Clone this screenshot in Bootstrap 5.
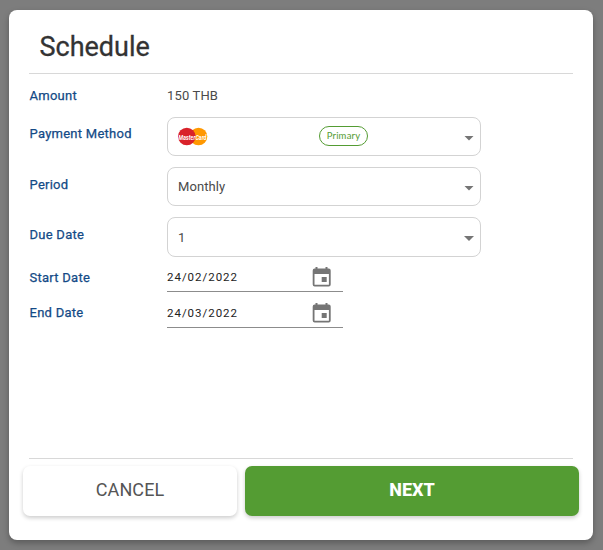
<!DOCTYPE html>
<html lang="en">
<head>
<meta charset="utf-8">
<meta name="viewport" content="width=device-width, initial-scale=1">
<title>Schedule</title>
<link href="https://cdn.jsdelivr.net/npm/bootstrap@5.3.0/dist/css/bootstrap.min.css" rel="stylesheet">
<style>
body{background:#7d7d7d;font-family:Roboto,"Liberation Sans",sans-serif;font-size:13px;line-height:20px;color:#4a4a4a;height:550px;overflow:hidden;padding:10px 10px 10px 9px}
.dialog-box{height:530px;border-radius:8px;box-shadow:0 3px 6px rgba(0,0,0,.28)}
.dialog-title{font-size:27px;line-height:32px;font-weight:400;-webkit-text-stroke:.3px #333;color:#333;margin:0 20px;padding:21px 10px 10px 10.5px;border-bottom:1px solid #d8d8d8}
.form-rows{padding:0 20px}
.field-label{width:138px;padding-left:.5px;color:#134a86;font-weight:400;-webkit-text-stroke:.25px #134a86;letter-spacing:.26px}
.amount-text{letter-spacing:.15px}
.select-box{width:314px;height:39px;border:1px solid #d3d3d3;border-radius:8px;padding:1px 6px 0 10px;letter-spacing:.1px}
.brand-logo{margin-top:-1px;overflow:visible}
.caret{width:10px;height:5px;background:#757575;clip-path:polygon(0 0,100% 0,50% 100%);margin-top:2px}
.primary-pill{width:49px;height:20px;border:1px solid #549c33;border-radius:10px;color:#549c33;font:9.5px/17px Lato,sans-serif;letter-spacing:.2px;margin:-3px 0 0 111px}
.date-box{width:176px;height:30px;border-bottom:1px solid #8c8c8c;color:#222;font-size:11.5px;letter-spacing:.98px;padding:0 9px 0 0}
.footer-rule{margin:0 20px;border-top:1px solid #d8d8d8}
.footer-btns{gap:8px;padding:7px 14px 24px}
.action-btn{height:50px;border:0;border-radius:7px;font-size:18px;line-height:26px;padding:0 0 2px;box-shadow:0 2px 4px rgba(0,0,0,.2)}
.cancel-btn{width:214px;background:#fff;color:#555;letter-spacing:.1px}
.next-btn{width:334px;background:#549c33;color:#fff;font-weight:800}
.row-amount{height:43px;padding-top:12px}
.row-select{height:50px}
.row-select .field-label{padding-top:7px}
.row-due .select-box{height:40px}
.row-period .field-label,.row-due .field-label{padding-top:8px}
.row-start{height:36px}
.row-first{margin-top:-5px}
.row-start .field-label{padding-top:6px}
.row-last .field-label{padding-top:5px}
</style>
</head>
<body>
<main class="dialog-box bg-white d-flex flex-column">
  <h1 class="dialog-title mb-0">Schedule</h1>
  <div class="form-rows flex-grow-1">
    <div class="d-flex row-amount"><div class="field-label">Amount</div><div class="amount-text">150 THB</div></div>
    <div class="d-flex row-select"><div class="field-label">Payment Method</div>
      <div class="select-box d-flex align-items-center">
        <svg width="30" height="20" viewBox="0 0 30 20" class="brand-logo flex-shrink-0">
          <circle cx="20.500" cy="9.500" r="8.800" fill="#ff9800"/><circle cx="8.800" cy="9.500" r="8.800" fill="#d9222a"/>
          <text x="0.6" y="12.5" textLength="28" lengthAdjust="spacingAndGlyphs" font-family="Roboto,sans-serif" font-weight="700" font-style="italic" font-size="8" fill="#fff">MasterCard</text>
        </svg>
        <span class="primary-pill text-center">Primary</span>
        <span class="caret ms-auto"></span>
      </div></div>
    <div class="d-flex row-select row-period"><div class="field-label">Period</div>
      <div class="select-box d-flex align-items-center justify-content-between"><span>Monthly</span><span class="caret"></span></div></div>
    <div class="d-flex row-select row-due"><div class="field-label">Due Date</div>
      <div class="select-box d-flex align-items-center justify-content-between"><span>1</span><span class="caret"></span></div></div>
    <div class="d-flex row-start row-first"><div class="field-label">Start Date</div>
      <div class="date-box d-flex align-items-center justify-content-between"><span>24/02/2022</span>
        <svg width="24" height="24" viewBox="0 0 24 24" fill="#757575"><path fill-rule="evenodd" d="M5.500 2h2v1.500h8V2h2v1.500h1.200a2 2 0 0 1 2 2V19.500a2 2 0 0 1-2 2H4.700a2 2 0 0 1-2-2V5.500a2 2 0 0 1 2-2h.8zM4.500 9v10.800h14.400V9zM11.700 12h5v5h-5z"/></svg></div></div>
    <div class="d-flex row-start row-last"><div class="field-label">End Date</div>
      <div class="date-box d-flex align-items-center justify-content-between"><span>24/03/2022</span>
        <svg width="24" height="24" viewBox="0 0 24 24" fill="#757575"><path fill-rule="evenodd" d="M5.500 2h2v1.500h8V2h2v1.500h1.200a2 2 0 0 1 2 2V19.500a2 2 0 0 1-2 2H4.700a2 2 0 0 1-2-2V5.500a2 2 0 0 1 2-2h.8zM4.500 9v10.800h14.400V9zM11.700 12h5v5h-5z"/></svg></div></div>
  </div>
  <div class="footer-rule"></div>
  <div class="footer-btns d-flex">
    <button type="button" class="btn action-btn cancel-btn">CANCEL</button>
    <button type="button" class="btn action-btn next-btn">NEXT</button>
  </div>
</main>
<script src="https://cdn.jsdelivr.net/npm/bootstrap@5.3.0/dist/js/bootstrap.bundle.min.js"></script>
</body>
</html>
